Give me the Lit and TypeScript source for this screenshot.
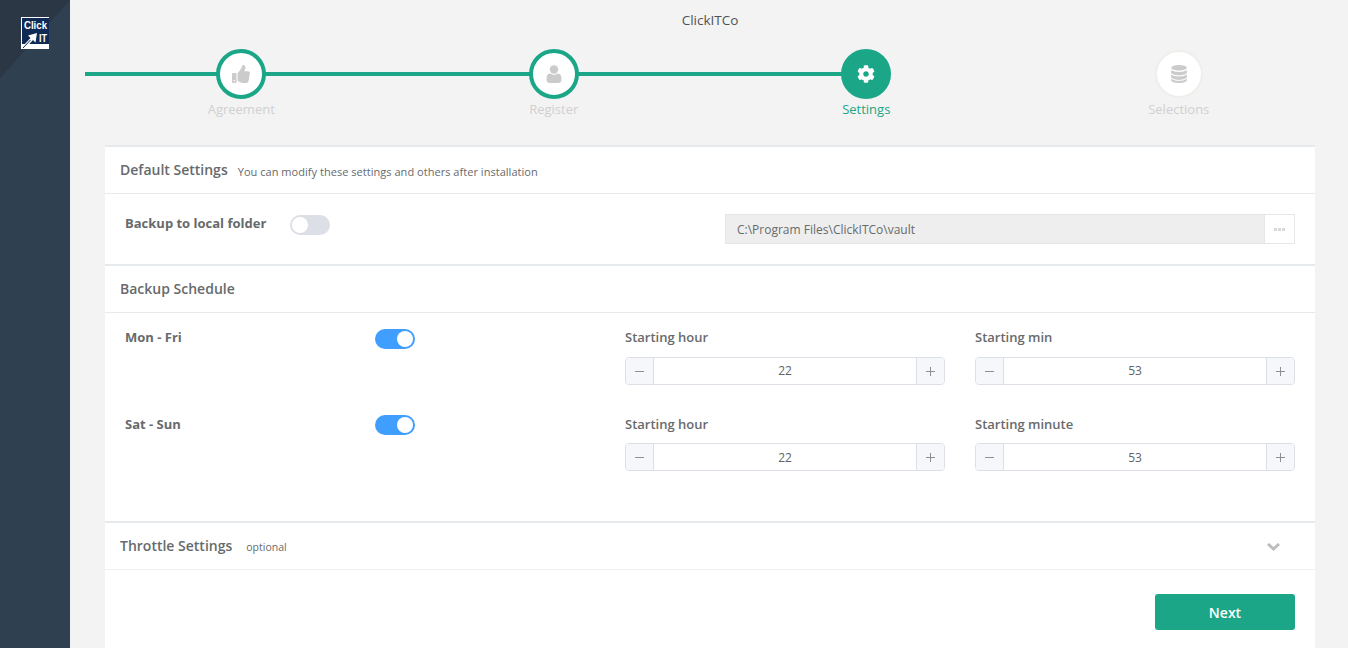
import { LitElement, css, html, svg } from 'lit';
import { customElement, property } from 'lit/decorators.js';

const ICONS = {
  thumb: svg`<path d="M104 224H24c-13.255 0-24 10.745-24 24v240c0 13.255 10.745 24 24 24h80c13.255 0 24-10.745 24-24V248c0-13.255-10.745-24-24-24zM64 472c-13.255 0-24-10.745-24-24s10.745-24 24-24 24 10.745 24 24-10.745 24-24 24zM384 81.452c0 42.416-25.97 66.208-33.277 94.548h101.723c33.397 0 59.397 27.746 59.553 58.098.084 17.938-7.546 37.249-19.439 49.197l-.11.11c9.836 23.337 8.237 56.037-9.308 79.469 8.681 25.895-.069 57.704-16.382 74.757 4.298 17.598 2.244 32.575-6.148 44.632C440.202 511.587 389.616 512 346.839 512l-2.845-.001c-48.287-.017-87.806-17.598-119.56-31.725-15.957-7.099-36.821-15.887-52.651-16.178-6.54-.12-11.783-5.457-11.783-11.998v-213.77c0-3.2 1.282-6.271 3.558-8.521 39.614-39.144 56.648-80.587 89.117-113.111 14.804-14.832 20.188-37.236 25.393-58.902C282.515 39.293 291.817 0 312 0c24 0 72 8 72 81.452z"/>`,
  user: svg`<circle cx="256" cy="130" r="120"/><path d="M80 270c30-25 60-30 80-30 25 25 60 40 96 40s71-15 96-40c20 0 50 5 80 30 25 25 36 70 36 150 0 60-40 92-90 92H134c-50 0-90-32-90-92 0-80 11-125 36-150z"/>`,
  cog: svg`<path d="M487.4 315.7l-42.6-24.6c4.3-23.2 4.3-47 0-70.2l42.6-24.6c4.9-2.8 7.1-8.6 5.5-14-11.1-35.6-30-67.8-54.7-94.6-3.8-4.1-10-5.1-14.8-2.3L380.8 110c-17.9-15.4-38.5-27.3-60.8-35.1V25.8c0-5.6-3.9-10.5-9.4-11.7-36.7-8.2-74.3-7.8-109.2 0-5.5 1.2-9.4 6.1-9.4 11.7V75c-22.2 7.9-42.8 19.8-60.8 35.1L88.7 85.5c-4.9-2.8-11-1.9-14.8 2.3-24.7 26.7-43.6 58.9-54.7 94.6-1.7 5.4.6 11.2 5.5 14L67.3 221c-4.3 23.2-4.3 47 0 70.2l-42.6 24.6c-4.9 2.8-7.1 8.6-5.5 14 11.1 35.6 30 67.8 54.7 94.6 3.8 4.1 10 5.1 14.8 2.3l42.6-24.6c17.9 15.4 38.5 27.3 60.8 35.1v49.2c0 5.6 3.9 10.5 9.4 11.7 36.7 8.2 74.3 7.8 109.2 0 5.5-1.2 9.4-6.1 9.4-11.7v-49.2c22.2-7.9 42.8-19.8 60.8-35.1l42.6 24.6c4.9 2.8 11 1.9 14.8-2.3 24.7-26.7 43.6-58.9 54.7-94.6 1.5-5.5-.7-11.3-5.6-14.1zM256 336c-44.1 0-80-35.9-80-80s35.9-80 80-80 80 35.9 80 80-35.9 80-80 80z"/>`,
  database: svg`<ellipse cx="256" cy="80" rx="224" ry="80"/><path d="M32 140v76c0 44 100 80 224 80s224-36 224-80v-76c-40 36-130 56-224 56S72 176 32 140z"/><path d="M32 268v76c0 44 100 80 224 80s224-36 224-80v-76c-40 36-130 56-224 56S72 304 32 268z"/><path d="M32 388v44c0 44 100 80 224 80s224-36 224-80v-44c-40 36-130 60-224 60S72 424 32 388z"/>`,
};

type IconName = keyof typeof ICONS;

const STEPS: { label: string; icon: IconName; state: string }[] = [
  { label: 'Agreement', icon: 'thumb', state: 'done' },
  { label: 'Register', icon: 'user', state: 'done' },
  { label: 'Settings', icon: 'cog', state: 'current' },
  { label: 'Selections', icon: 'database', state: 'todo' },
];

@customElement('ui-toggle')
export class Toggle extends LitElement {
  @property({ type: Boolean }) on = false;

  static styles = css`
    :host {
      display: block;
      width: 40px;
      height: 20px;
    }

    .track {
      height: 20px;
      border-radius: 10px;
      background: #dcdfe6;
      display: flex;
      align-items: center;
      padding: 0 2px;
      box-sizing: border-box;
    }

    .track.on {
      background: #409eff;
      justify-content: flex-end;
    }

    .knob {
      width: 16px;
      height: 16px;
      border-radius: 50%;
      background: #fff;
    }
  `;

  render() {
    return html`<div class="track ${this.on ? 'on' : ''}"><div class="knob"></div></div>`;
  }
}

@customElement('ui-number')
export class NumberField extends LitElement {
  @property({ type: String }) label = '';
  @property({ type: String }) value = '';
  @property({ type: Boolean }) low = false;

  static styles = css`
    :host {
      display: block;
    }

    .label {
      font-size: 13px;
      font-weight: 600;
      line-height: 18px;
      margin-bottom: 11px;
      color: #676a6c;
    }

    .low .label {
      padding-top: 1px;
      margin-bottom: 10px;
    }

    .box {
      display: flex;
      height: 28px;
      box-sizing: border-box;
      border: 1px solid #dcdfe6;
      border-radius: 4px;
      overflow: hidden;
      background: #fff;
    }

    .btn {
      width: 27px;
      flex: none;
      background: #f5f7fa;
      display: flex;
      align-items: center;
      justify-content: center;
    }

    .btn.minus {
      border-right: 1px solid #dcdfe6;
    }

    .btn.plus {
      border-left: 1px solid #dcdfe6;
    }

    .btn svg {
      width: 9px;
      height: 9px;
      stroke: #8f8f93;
      stroke-width: 1;
      fill: none;
    }

    .value {
      flex: 1;
      text-align: center;
      font-size: 12px;
      line-height: 26px;
      color: #606266;
    }

    .low .value {
      line-height: 28px;
    }
  `;

  render() {
    return html`
      <div class=${this.low ? 'low' : ''}>
        <div class="label">${this.label}</div>
        <div class="box">
          <div class="btn minus"><svg viewBox="0 0 9 9"><path d="M0 4.5h9"/></svg></div>
          <div class="value">${this.value}</div>
          <div class="btn plus"><svg viewBox="0 0 9 9"><path d="M0 4.5h9M4.5 0v9"/></svg></div>
        </div>
      </div>
    `;
  }
}

@customElement('app-root')
export class AppRoot extends LitElement {
  static styles = css`
    :host {
      display: flex;
      height: 648px;
      overflow: hidden;
      font-family: 'Open Sans', sans-serif;
      color: #676a6c;
      background: #f3f3f3;
    }

    .sidebar {
      width: 70px;
      flex: none;
      background:
        linear-gradient(to bottom right, #2b3745 50%, transparent 50.5%) no-repeat 0 0 / 70px 78px,
        #2f4050;
      padding: 17px 0 0 21px;
      box-sizing: border-box;
    }

    .logo {
      display: block;
      width: 28px;
      height: 32px;
    }

    .main {
      flex: 1;
      min-width: 0;
    }

    .brand {
      text-align: center;
      font-size: 13.5px;
      line-height: 20px;
      padding: 10px 0 0 2px;
      color: #4f5254;
    }

    .stepper {
      display: flex;
      margin: 19px 13px 0 15px;
      height: 96px;
    }

    .step {
      flex: 1;
      position: relative;
      display: flex;
      flex-direction: column;
      align-items: center;
    }

    .step::before {
      content: '';
      position: absolute;
      top: 23px;
      left: 0;
      width: 100%;
      height: 4px;
      background: #1aa687;
    }

    .step.current::before {
      width: 50%;
    }

    .step.todo::before {
      display: none;
    }

    .circle {
      position: relative;
      width: 50px;
      height: 50px;
      box-sizing: border-box;
      border-radius: 50%;
      border: 4px solid #1aa687;
      background: #fff;
      display: flex;
      align-items: center;
      justify-content: center;
    }

    .current .circle {
      background: #1aa687;
    }

    .todo .circle {
      width: 48px;
      height: 48px;
      margin: 1px 0;
      border: 2px solid #f0eeea;
    }

    .circle svg {
      width: 18px;
      height: 18px;
      fill: #cbcbcb;
    }

    .current .circle svg {
      fill: #fff;
    }

    .todo .circle svg {
      height: 20px;
    }

    .step-label {
      font-size: 13px;
      line-height: 18px;
      margin-top: 1px;
      color: #d0d0d0;
    }

    .current .step-label {
      color: #1aa687;
    }

    .card {
      margin: 0 33px 0 35px;
      background: #fff;
      height: 503px;
    }

    .head {
      display: flex;
      align-items: baseline;
      padding: 13px 15px 0;
      height: 33px;
      border-top: 2px solid #e7eaec;
      border-bottom: 1px solid #e7eaec;
    }

    .head h2 {
      margin: 0;
      font-size: 14px;
      line-height: 20px;
      font-weight: 600;
    }

    .head small {
      align-self: flex-start;
      margin: 2px 0 0 10px;
      font-size: 11px;
      line-height: 20px;
      letter-spacing: 0.035px;
    }

    .head.throttle {
      border-bottom-color: #f0f0f0;
    }

    .head.throttle small {
      align-self: baseline;
      margin: 0 0 0 14px;
      font-size: 10.5px;
      letter-spacing: 0;
    }

    .head .chevron {
      margin-left: auto;
      margin-right: 20px;
      width: 13px;
      height: 8px;
      align-self: center;
      position: relative;
      top: -6px;
      fill: none;
      stroke: #bdbdbd;
      stroke-width: 3;
    }

    .local {
      display: flex;
      height: 70px;
      box-sizing: border-box;
      padding: 20px 20px 0;
    }

    .local .name {
      width: 165px;
      font-size: 13px;
      font-weight: 700;
      line-height: 18px;
    }

    .local ui-toggle {
      margin-top: 1px;
    }

    .path {
      margin-left: auto;
      width: 570px;
      height: 30px;
      display: flex;
    }

    .path .text {
      flex: 1;
      background: #eee;
      border: 1px solid #e5e6e7;
      border-right: none;
      padding-left: 11px;
      font-size: 12px;
      line-height: 30px;
      height: 28px;
      color: #676a6c;
    }

    .path .more {
      width: 31px;
      box-sizing: border-box;
      border: 1px solid #e5e6e7;
      display: flex;
      align-items: center;
      justify-content: center;
      gap: 1px;
    }

    .path .more i {
      width: 3px;
      height: 3px;
      background: #d8d8d8;
    }

    .schedule {
      height: 208px;
      box-sizing: border-box;
      padding: 15px 20px 0;
      display: grid;
      grid-template-columns: 250px 250px 320px 320px;
      grid-auto-rows: 57px;
      row-gap: 29px;
    }

    .schedule .name {
      font-size: 13px;
      font-weight: 700;
      line-height: 18px;
    }

    .schedule .name.low {
      padding-top: 1px;
    }

    .schedule ui-toggle {
      margin-top: 1px;
    }

    .schedule .last {
      margin-left: 30px;
      width: 320px;
    }

    .footer {
      display: flex;
      justify-content: flex-end;
      padding: 24px 20px 0;
    }

    .next {
      width: 140px;
      height: 36px;
      border: none;
      border-radius: 3px;
      background: #1aa687;
      color: #fff;
      font-family: inherit;
      font-size: 14px;
      font-weight: 600;
    }
  `;

  private renderStep(s: { label: string; icon: IconName; state: string }) {
    return html`
      <div class="step ${s.state}">
        <div class="circle"><svg viewBox="0 0 512 512">${ICONS[s.icon]}</svg></div>
        <div class="step-label">${s.label}</div>
      </div>
    `;
  }

  render() {
    return html`
      <aside class="sidebar">
        <svg class="logo" viewBox="0 0 28 32">
          <rect width="28" height="32" fill="#fff"/>
          <rect x="1" y="1" width="27" height="26" fill="#0f2a55"/>
          <text x="3" y="12" font-family="Liberation Sans" font-weight="700" font-size="11" fill="#fff" textLength="23" lengthAdjust="spacingAndGlyphs">Click</text>
          <text x="18" y="25" font-family="Liberation Sans" font-weight="700" font-size="10" fill="#fff" textLength="8" lengthAdjust="spacingAndGlyphs">IT</text>
          <path d="M2 29l7.500-8-2.500-2.500 9-2.500-1.500 9.500-2.500-2.500-7.500 8z" fill="#fff"/>
          <path d="M2 31l7.500-8" stroke="#0f2a55" stroke-width="1"/>
        </svg>
      </aside>
      <div class="main">
        <div class="brand">ClickITCo</div>
        <div class="stepper">${STEPS.map((s) => this.renderStep(s))}</div>
        <section class="card">
          <div class="head"><h2>Default Settings</h2><small>You can modify these settings and others after installation</small></div>
          <div class="local">
            <div class="name">Backup to local folder</div>
            <ui-toggle></ui-toggle>
            <div class="path">
              <div class="text">C:\\Program Files\\ClickITCo\\vault</div>
              <div class="more"><i></i><i></i><i></i></div>
            </div>
          </div>
          <div class="head"><h2>Backup Schedule</h2></div>
          <div class="schedule">
            <div class="name">Mon - Fri</div>
            <ui-toggle on></ui-toggle>
            <ui-number label="Starting hour" value="22"></ui-number>
            <ui-number class="last" label="Starting min" value="53"></ui-number>
            <div class="name low">Sat - Sun</div>
            <ui-toggle on></ui-toggle>
            <ui-number low label="Starting hour" value="22"></ui-number>
            <ui-number low class="last" label="Starting minute" value="53"></ui-number>
          </div>
          <div class="head throttle">
            <h2>Throttle Settings</h2><small>optional</small>
            <svg class="chevron" viewBox="0 0 13 8"><path d="M1 1l5.500 5 5.500-5"/></svg>
          </div>
          <div class="footer"><button class="next">Next</button></div>
        </section>
      </div>
    `;
  }
}
